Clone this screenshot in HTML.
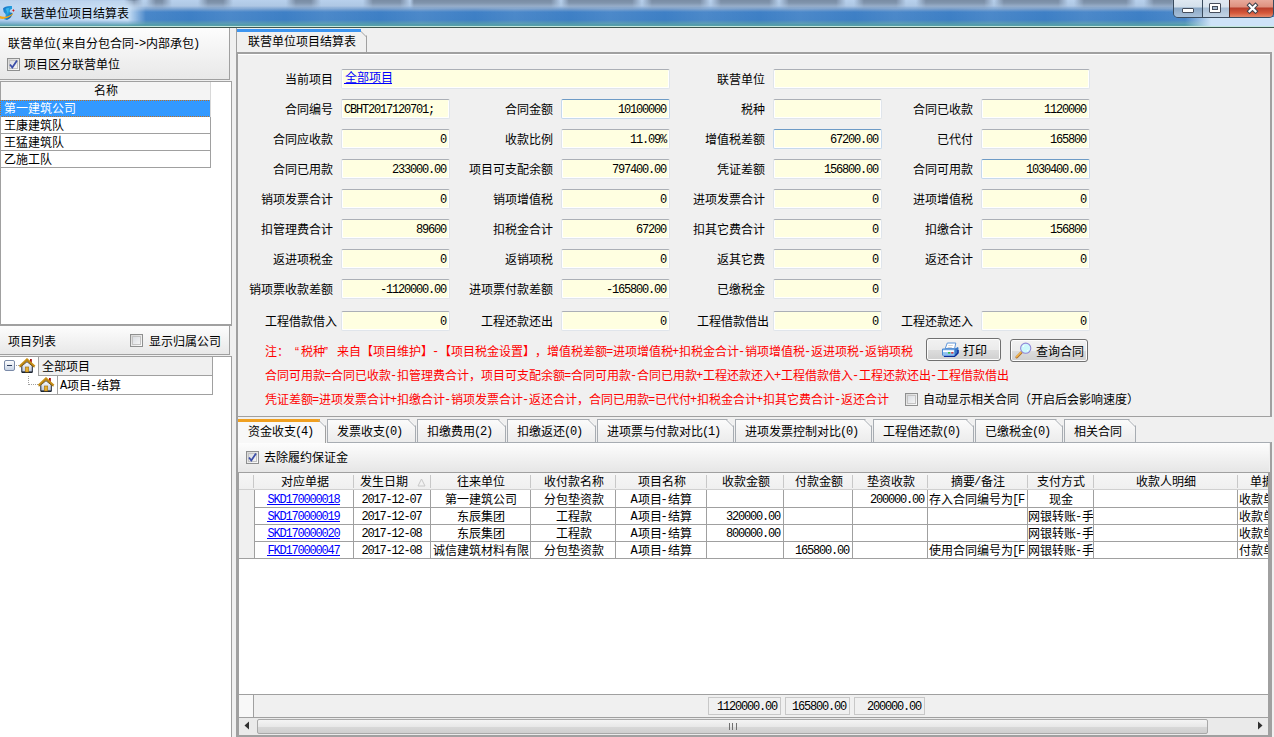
<!DOCTYPE html><html lang="zh-CN"><head><meta charset="utf-8"><style>
*{box-sizing:border-box}
html,body{margin:0;padding:0}
body{width:1274px;height:737px;overflow:hidden;position:relative;background:#f0f0f0;font-family:"Liberation Sans",sans-serif;font-size:12px;color:#000;line-height:1}
.a{position:absolute}
w{display:inline-block;width:12px;text-align:center;padding-left:1px;position:relative;top:1px;font-style:normal;font-weight:normal;text-decoration:none}
.nocjk w:not(.q){-webkit-text-fill-color:transparent;background-repeat:no-repeat;background-image:linear-gradient(currentColor,currentColor),linear-gradient(currentColor,currentColor),linear-gradient(currentColor,currentColor),linear-gradient(currentColor,currentColor),linear-gradient(currentColor,currentColor),linear-gradient(currentColor,currentColor),linear-gradient(currentColor,currentColor);background-size:10px 1px,10px 1px,1px 11px,1px 11px,8px 1px,8px 1px,0 0;background-position:1px 0,1px 10px,1px 0,10px 0,2px 4px,2px 7px,0 0}
.nocjk w.b{background-size:1px 11px,3px 1px,6px 1px,6px 1px,1px 10px,1px 10px,4px 1px;background-position:2px 0,0 3px,5px 1px,5px 10px,5px 1px,10px 1px,6px 5px}
.nocjk w.c{background-size:10px 1px,10px 1px,10px 1px,1px 11px,1px 5px,1px 5px,0 0;background-position:1px 1px,1px 5px,1px 10px,6px 0,2px 5px,10px 5px,0 0}
.nocjk w.p{background-image:linear-gradient(currentColor,currentColor);background-size:2px 2px;background-position:2px 9px}
h{font-family:"Liberation Mono",monospace;font-size:12px;letter-spacing:-1.2px;font-weight:normal}
.t{position:absolute;white-space:nowrap;line-height:12px;height:12px}
.n{font-family:"Liberation Mono",monospace;font-size:12px;letter-spacing:-1.2px}
.inp{position:absolute;height:20px;background:#ffffe1;border:1px solid #e0e5eb;border-top-color:#abafb6;border-radius:2px;box-shadow:inset 1px 0 #fff,inset -1px -1px #fff}
.inp .v{position:absolute;right:3px;top:3px;white-space:nowrap;line-height:12px}
.lb{position:absolute;white-space:nowrap;line-height:12px;text-align:right}
.cb{position:absolute;width:13px;height:13px;border:1px solid #8e8f8f;background:linear-gradient(135deg,#d6d6d6,#fdfdfd)}
.cb i{position:absolute;left:1px;top:1px;width:9px;height:9px;border:1px solid #c4c4c4;background:linear-gradient(135deg,#dadde2,#f4f4f4)}
.foc{border-color:#c6d9ec!important;border-top-color:#6e9bc6!important}
.grad{background:linear-gradient(#fdfdfd,#e8e8e8)}
.tab{position:absolute;top:419px;height:24px;border:1px solid #a7acb2;border-bottom:none;background:linear-gradient(#fbfbfb,#ebebeb);clip-path:polygon(0 0,calc(100% - 7px) 0,100% 7px,100% 100%,0 100%)}
.tabc{position:absolute;top:419px;width:8px;height:8px}
.hd{position:absolute;top:473px;height:17px;background:#f4f4f4}
.gl{position:absolute;background:#a0a0a0}
a.lk{color:#0000ff;text-decoration:underline}
.red{color:#ff0000}
</style></head><body>
<div class="a" style="left:0;top:0;width:1274px;height:28px;background:linear-gradient(#b8d0ec 0px,#aec7e4 6px,#7aa2d0 9px,#3f80c6 12px,#3d7fc4 20px,#4a8db8 22px,#58a3a8 26px,#c4e8de 26px,#c4e8de 27px,#3d5650 27px,#3d5650 28px)"></div>
<div class="a" style="left:0;top:0;width:1274px;height:11px;background:linear-gradient(90deg,rgba(120,138,160,0) 124px, rgba(105,122,145,0.8) 134px, rgba(105,122,145,0.8) 133px, rgba(120,138,160,0) 143px,rgba(120,138,160,0) 146px, rgba(105,122,145,0.8) 156px, rgba(105,122,145,0.8) 162px, rgba(120,138,160,0) 172px,rgba(120,138,160,0) 198px, rgba(105,122,145,0.8) 208px, rgba(105,122,145,0.8) 223px, rgba(120,138,160,0) 233px,rgba(120,138,160,0) 286px, rgba(105,122,145,0.8) 296px, rgba(105,122,145,0.8) 311px, rgba(120,138,160,0) 321px,rgba(120,138,160,0) 363px, rgba(105,122,145,0.8) 373px, rgba(105,122,145,0.8) 400px, rgba(120,138,160,0) 410px,rgba(120,138,160,0) 404px, rgba(105,122,145,0.8) 414px, rgba(105,122,145,0.8) 551px, rgba(120,138,160,0) 561px,rgba(120,138,160,0) 559px, rgba(105,122,145,0.8) 569px, rgba(105,122,145,0.8) 632px, rgba(120,138,160,0) 642px,rgba(120,138,160,0) 642px, rgba(105,122,145,0.8) 652px, rgba(105,122,145,0.8) 700px, rgba(120,138,160,0) 710px,rgba(120,138,160,0) 711px, rgba(105,122,145,0.8) 721px, rgba(105,122,145,0.8) 769px, rgba(120,138,160,0) 779px,rgba(120,138,160,0) 779px, rgba(105,122,145,0.8) 789px, rgba(105,122,145,0.8) 836px, rgba(120,138,160,0) 846px,rgba(120,138,160,0) 854px, rgba(105,122,145,0.8) 864px, rgba(105,122,145,0.8) 896px, rgba(120,138,160,0) 906px,rgba(120,138,160,0) 916px, rgba(105,122,145,0.8) 926px, rgba(105,122,145,0.8) 984px, rgba(120,138,160,0) 994px,rgba(120,138,160,0) 994px, rgba(105,122,145,0.8) 1004px, rgba(105,122,145,0.8) 1058px, rgba(120,138,160,0) 1068px,rgba(120,138,160,0) 1074px, rgba(105,122,145,0.8) 1084px, rgba(105,122,145,0.8) 1126px, rgba(120,138,160,0) 1136px,rgba(120,138,160,0) 1144px, rgba(105,122,145,0.8) 1154px, rgba(105,122,145,0.8) 1171px, rgba(120,138,160,0) 1181px);-webkit-mask-image:linear-gradient(#000 0px,rgba(0,0,0,0.85) 3px,rgba(0,0,0,0.3) 7px,rgba(0,0,0,0) 11px);mask-image:linear-gradient(#000 0px,rgba(0,0,0,0.85) 3px,rgba(0,0,0,0.3) 7px,rgba(0,0,0,0) 11px)"></div>
<div class="a" style="left:0;top:8px;width:1274px;height:16px;background:repeating-linear-gradient(90deg,rgba(255,255,255,0) 0px,rgba(255,255,255,0.07) 40px,rgba(255,255,255,0) 95px)"></div>
<div class="a" style="left:1185px;top:17px;width:89px;height:9px;background:linear-gradient(90deg,rgba(206,227,248,0) 0,rgba(206,227,248,1) 26px)"></div>
<div class="a" style="left:0;top:1px;width:150px;height:25px;background:linear-gradient(90deg,rgba(200,222,246,0.85) 0,rgba(208,228,248,0.95) 128px,rgba(205,225,245,0) 146px);-webkit-mask-image:linear-gradient(rgba(0,0,0,0.3) 0,#000 7px,#000 19px,rgba(0,0,0,0) 25px);mask-image:linear-gradient(rgba(0,0,0,0.3) 0,#000 7px,#000 19px,rgba(0,0,0,0) 25px)"></div>
<svg class="a" style="left:0;top:0" width="20" height="26" viewBox="0 0 20 26">
<defs><linearGradient id="ig" x1="0" y1="0" x2="1" y2="1"><stop offset="0" stop-color="#1468c0"/><stop offset="0.5" stop-color="#22a0e0"/><stop offset="1" stop-color="#063a88"/></linearGradient></defs>
<path d="M3 8.5 Q5 5.5 12 6 L12 8.8 Q9.5 9.5 9.6 11.5 Q10 12.5 12.5 13 Q12 18 7 20 L3.5 19 Q6.5 16.5 5.5 14 Q3 12 3 8.5 Z" fill="url(#ig)"/>
<path d="M5.5 9 Q7 7.5 9 8 L8 14 Q7 11 5.5 9 Z" fill="#3ec0f0" opacity="0.8"/>
<path d="M0 16 Q6 18.5 13 13.2 L12.6 14.8 Q6 20 0 18.6 Z" fill="#f4a818"/>
<path d="M13.4 9 L14 10 L15 10.4 L14 10.8 L13.4 12 L12.8 10.8 L11.8 10.4 L12.8 10 Z" fill="#d01818"/>
</svg>
<div class="t" style="left:20px;top:7px"><w class="c">联</w><w class="b">营</w><w>单</w><w>位</w><w>项</w><w class="c">目</w><w class="b">结</w><w class="b">算</w><w>表</w></div>
<div class="a" style="left:1173px;top:-3px;width:101px;height:21px;border:1px solid #3a4b5e;border-top:none;border-radius:0 0 5px 5px;overflow:hidden">
 <div class="a" style="left:0;top:0;width:28px;height:20px;background:linear-gradient(#e4ecf5,#d3dfeb 50%,#8aa7c6 55%,#a9c0d8)"></div>
 <div class="a" style="left:28px;top:0;width:1px;height:20px;background:#3a4b5e"></div>
 <div class="a" style="left:29px;top:0;width:26px;height:20px;background:linear-gradient(#e4ecf5,#d8e3ee 50%,#a9bfd6 55%,#c3d4e6)"></div>
 <div class="a" style="left:55px;top:0;width:1px;height:20px;background:#5a2a20"></div>
 <div class="a" style="left:56px;top:0;width:45px;height:20px;background:linear-gradient(#ecb4a8,#de907e 50%,#b83e2c 55%,#d6583a 80%,#e48a6c)"></div>
</div>
<div class="a" style="left:1182px;top:8px;width:12px;height:5px;background:#fff;border:1px solid #454d5c;border-radius:1px"></div>
<div class="a" style="left:1209px;top:3px;width:12px;height:10px;background:#fff;border:1px solid #454d5c;border-radius:1px"></div>
<div class="a" style="left:1212px;top:6px;width:6px;height:4px;background:#a5bad0;border:1px solid #454d5c"></div>
<svg class="a" style="left:1246px;top:2px" width="13" height="12" viewBox="0 0 13 12"><path d="M3.5 3.2 L9.5 9.2 M9.5 3.2 L3.5 9.2" stroke="#40444e" stroke-width="4.2" stroke-linecap="square"/><path d="M3.5 3.2 L9.5 9.2 M9.5 3.2 L3.5 9.2" stroke="#fff" stroke-width="2.2" stroke-linecap="square"/></svg>
<div class="a grad" style="left:0;top:28px;width:230px;height:52px;border-right:1px solid #a0a0a0;border-bottom:1px solid #a0a0a0"></div>
<div class="t" style="left:7px;top:37px"><w class="c">联</w><w class="b">营</w><w>单</w><w>位</w><h>(</h><w>来</w><w>自</w><w class="b">分</w><w class="b">包</w><w class="c">合</w><w>同</w><h>-&gt;</h><w class="b">内</w><w class="b">部</w><w>承</w><w class="b">包</w><h>)</h></div>
<div class="cb" style="left:7px;top:58px"><i></i></div>
<svg class="a" style="left:8px;top:59px" width="11" height="11" viewBox="0 0 11 11"><path d="M2 5.5 L4.3 8.5 L9 1.5" stroke="#3c4ea8" stroke-width="1.8" fill="none"/></svg>
<div class="t" style="left:23px;top:58px"><w>项</w><w class="c">目</w><w>区</w><w class="b">分</w><w class="c">联</w><w class="b">营</w><w>单</w><w>位</w></div>
<div class="a" style="left:0;top:81px;width:232px;height:245px;background:#fff;border:1px solid #a0a0a0;border-bottom:2px solid #a0a0a0"></div>
<div class="a" style="left:1px;top:82px;width:210px;height:18px;background:#f4f4f4"></div>
<div class="t" style="left:93px;top:84px"><w class="b">名</w><w class="b">称</w></div>
<div class="a" style="left:0px;top:100px;width:211px;height:17px;background:#3399ff;border:1px dotted #c07020"></div>
<div class="t" style="left:3px;top:102px;color:#fff"><w class="c">第</w><w>一</w><w class="c">建</w><w>筑</w><w>公</w><w class="b">司</w></div>
<div class="a" style="left:0;top:116px;width:211px;height:18px;border:1px solid #a0a0a0;border-top:none"></div>
<div class="t" style="left:3px;top:119px"><w class="c">王</w><w class="b">康</w><w class="c">建</w><w>筑</w><w class="b">队</w></div>
<div class="a" style="left:0;top:133px;width:211px;height:18px;border:1px solid #a0a0a0;border-top:none"></div>
<div class="t" style="left:3px;top:136px"><w class="c">王</w><w class="b">猛</w><w class="c">建</w><w>筑</w><w class="b">队</w></div>
<div class="a" style="left:0;top:150px;width:211px;height:18px;border:1px solid #a0a0a0;border-top:none"></div>
<div class="t" style="left:3px;top:153px"><w class="c">乙</w><w class="c">施</w><w class="b">工</w><w class="b">队</w></div>
<div class="a" style="left:210px;top:82px;width:1px;height:35px;background:#d8d8d8"></div>
<div class="a grad" style="left:0;top:326px;width:230px;height:29px;border-right:1px solid #a0a0a0;border-bottom:1px solid #a0a0a0"></div>
<div class="t" style="left:7px;top:335px"><w>项</w><w class="c">目</w><w>列</w><w>表</w></div>
<div class="cb" style="left:130px;top:334px"><i></i></div>
<div class="t" style="left:148px;top:335px"><w class="c">显</w><w class="c">示</w><w>归</w><w>属</w><w>公</w><w class="b">司</w></div>
<div class="a" style="left:0;top:356px;width:232px;height:381px;background:#fff;border-top:1px solid #a0a0a0;border-right:1px solid #a0a0a0"></div>
<div class="a" style="left:38px;top:357px;width:175px;height:19px;background:#f0f0f0;border-left:1px solid #a0a0a0;border-right:1px solid #a0a0a0;border-bottom:1px solid #a0a0a0"></div>
<div class="t" style="left:41px;top:360px"><w class="c">全</w><w class="b">部</w><w>项</w><w class="c">目</w></div>
<div class="a" style="left:57px;top:376px;width:156px;height:19px;background:#fff;border-left:1px solid #a0a0a0;border-right:1px solid #a0a0a0;border-bottom:1px solid #a0a0a0"></div>
<div class="a" style="left:0;top:394px;width:58px;height:1px;background:#a0a0a0"></div>
<div class="t" style="left:60px;top:379px"><h>A</h><w>项</w><w class="c">目</w><h>-</h><w class="b">结</w><w class="b">算</w></div>
<div class="a" style="left:4px;top:360px;width:11px;height:11px;border:1px solid #7a8aa8;border-radius:2px;background:linear-gradient(#fefefe,#c8d4e6)"></div>
<div class="a" style="left:7px;top:365px;width:5px;height:1px;background:#2a3a5a"></div>
<div class="a" style="left:16px;top:365px;width:3px;border-top:1px dotted #a0a0a0"></div>
<div class="a" style="left:28px;top:376px;height:9px;border-left:1px dotted #a0a0a0"></div>
<div class="a" style="left:28px;top:384px;width:10px;border-top:1px dotted #a0a0a0"></div>
<svg class="a" style="left:19px;top:358px" width="17" height="16" viewBox="0 0 17 16"><defs><linearGradient id="hb" x1="0" y1="0" x2="0" y2="1"><stop offset="0" stop-color="#ffffff"/><stop offset="1" stop-color="#b8c4dc"/></linearGradient></defs><rect x="11" y="1" width="1.8" height="4.5" fill="#a81010"/><path d="M2.8 8 L8 3.6 L13.3 8 L13.3 14.2 L2.8 14.2 Z" fill="url(#hb)" stroke="#1c2430" stroke-width="1"/><path d="M2.8 14.3 L13.3 14.3" stroke="#1c2430" stroke-width="1.4"/><rect x="6.3" y="9" width="3.4" height="5" fill="#e8b030" stroke="#a07010" stroke-width="0.6"/><path d="M0.6 8.6 L8 1.6 L15.6 8.6" stroke="#c89018" stroke-width="2.4" fill="none" stroke-linejoin="miter"/><path d="M0.6 9.4 L8 2.6 L15.6 9.4" stroke="#7a5008" stroke-width="0.6" fill="none" opacity="0.7"/></svg>
<svg class="a" style="left:38px;top:377px" width="17" height="16" viewBox="0 0 17 16"><defs><linearGradient id="hb2" x1="0" y1="0" x2="0" y2="1"><stop offset="0" stop-color="#ffffff"/><stop offset="1" stop-color="#b8c4dc"/></linearGradient></defs><rect x="11" y="1" width="1.8" height="4.5" fill="#a81010"/><path d="M2.8 8 L8 3.6 L13.3 8 L13.3 14.2 L2.8 14.2 Z" fill="url(#hb2)" stroke="#1c2430" stroke-width="1"/><path d="M2.8 14.3 L13.3 14.3" stroke="#1c2430" stroke-width="1.4"/><rect x="6.3" y="9" width="3.4" height="5" fill="#e8b030" stroke="#a07010" stroke-width="0.6"/><path d="M0.6 8.6 L8 1.6 L15.6 8.6" stroke="#c89018" stroke-width="2.4" fill="none" stroke-linejoin="miter"/><path d="M0.6 9.4 L8 2.6 L15.6 9.4" stroke="#7a5008" stroke-width="0.6" fill="none" opacity="0.7"/></svg>
<div class="a" style="left:236px;top:28px;width:1px;height:709px;background:#a0a0a0"></div>
<div class="a" style="left:237px;top:29px;width:130px;height:24px;background:#f0f0f0;border-right:1px solid #a0a0a0;clip-path:polygon(0 0,calc(100% - 7px) 0,100% 7px,100% 100%,0 100%)"></div>
<svg class="a" style="left:359px;top:29px" width="8" height="8"><path d="M0 0.5 L7.5 8" stroke="#a0a0a0" stroke-width="1"/></svg>
<div class="a" style="left:237px;top:29px;width:124px;height:3px;background:#3d95f0"></div>
<div class="t" style="left:247px;top:35px"><w class="c">联</w><w class="b">营</w><w>单</w><w>位</w><w>项</w><w class="c">目</w><w class="b">结</w><w class="b">算</w><w>表</w></div>
<div class="a" style="left:237px;top:52px;width:1035px;height:365px;border:1px solid #a0a0a0;border-right:2px solid #a0a0a0;border-top:2px solid #a0a0a0"></div>
<div class="a" style="left:238px;top:54px;width:1032px;height:1px;background:#fff"></div>
<div class="lb" style="right:942px;top:73px"><w class="b">当</w><w>前</w><w>项</w><w class="c">目</w></div>
<div class="inp" style="left:341px;top:69px;width:329px"><div class="t" style="left:2px;top:1px;height:13px"><span style="color:#0000ff;border-bottom:1px solid #0000ff;display:inline-block;line-height:12px;height:13px"><w class="c">全</w><w class="b">部</w><w>项</w><w class="c">目</w></span></div></div>
<div class="lb" style="right:510px;top:73px"><w class="c">联</w><w class="b">营</w><w>单</w><w>位</w></div>
<div class="inp" style="left:773px;top:69px;width:317px"></div>
<div class="lb" style="right:942px;top:103px"><w class="c">合</w><w>同</w><w class="c">编</w><w>号</w></div>
<div class="inp" style="left:341px;top:99px;width:109px"><div class="t n" style="left:2px;top:4px"><h>CBHT2017120701;</h></div></div>
<div class="lb" style="right:722px;top:103px"><w class="c">合</w><w>同</w><w>金</w><w>额</w></div>
<div class="inp foc" style="left:561px;top:99px;width:109px"><div class="v n" style="top:4px"><h>10100000</h></div></div>
<div class="lb" style="right:510px;top:103px"><w class="b">税</w><w class="c">种</w></div>
<div class="inp" style="left:773px;top:99px;width:109px"><div class="v n" style="top:4px"></div></div>
<div class="lb" style="right:302px;top:103px"><w class="c">合</w><w>同</w><w class="c">已</w><w class="c">收</w><w class="b">款</w></div>
<div class="inp" style="left:981px;top:99px;width:109px"><div class="v n" style="top:4px"><h>1120000</h></div></div>
<div class="lb" style="right:942px;top:133px"><w class="c">合</w><w>同</w><w class="c">应</w><w class="c">收</w><w class="b">款</w></div>
<div class="inp" style="left:341px;top:129px;width:109px"><div class="v n" style="top:4px"><h>0</h></div></div>
<div class="lb" style="right:722px;top:133px"><w class="c">收</w><w class="b">款</w><w class="b">比</w><w class="c">例</w></div>
<div class="inp" style="left:561px;top:129px;width:109px"><div class="v n" style="top:4px"><h>11.09%</h></div></div>
<div class="lb" style="right:510px;top:133px"><w>增</w><w class="c">值</w><w class="b">税</w><w class="b">差</w><w>额</w></div>
<div class="inp foc" style="left:773px;top:129px;width:109px"><div class="v n" style="top:4px"><h>67200.00</h></div></div>
<div class="lb" style="right:302px;top:133px"><w class="c">已</w><w class="c">代</w><w>付</w></div>
<div class="inp" style="left:981px;top:129px;width:109px"><div class="v n" style="top:4px"><h>165800</h></div></div>
<div class="lb" style="right:942px;top:163px"><w class="c">合</w><w>同</w><w class="c">已</w><w class="b">用</w><w class="b">款</w></div>
<div class="inp" style="left:341px;top:159px;width:109px"><div class="v n" style="top:4px"><h>233000.00</h></div></div>
<div class="lb" style="right:722px;top:163px"><w>项</w><w class="c">目</w><w class="b">可</w><w class="b">支</w><w>配</w><w>余</w><w>额</w></div>
<div class="inp" style="left:561px;top:159px;width:109px"><div class="v n" style="top:4px"><h>797400.00</h></div></div>
<div class="lb" style="right:510px;top:163px"><w>凭</w><w class="c">证</w><w class="b">差</w><w>额</w></div>
<div class="inp" style="left:773px;top:159px;width:109px"><div class="v n" style="top:4px"><h>156800.00</h></div></div>
<div class="lb" style="right:302px;top:163px"><w class="c">合</w><w>同</w><w class="b">可</w><w class="b">用</w><w class="b">款</w></div>
<div class="inp foc" style="left:981px;top:159px;width:109px"><div class="v n" style="top:4px"><h>1030400.00</h></div></div>
<div class="lb" style="right:942px;top:193px"><w class="c">销</w><w>项</w><w class="b">发</w><w>票</w><w class="c">合</w><w>计</w></div>
<div class="inp" style="left:341px;top:189px;width:109px"><div class="v n" style="top:4px"><h>0</h></div></div>
<div class="lb" style="right:722px;top:193px"><w class="c">销</w><w>项</w><w>增</w><w class="c">值</w><w class="b">税</w></div>
<div class="inp" style="left:561px;top:189px;width:109px"><div class="v n" style="top:4px"><h>0</h></div></div>
<div class="lb" style="right:510px;top:193px"><w class="c">进</w><w>项</w><w class="b">发</w><w>票</w><w class="c">合</w><w>计</w></div>
<div class="inp" style="left:773px;top:189px;width:109px"><div class="v n" style="top:4px"><h>0</h></div></div>
<div class="lb" style="right:302px;top:193px"><w class="c">进</w><w>项</w><w>增</w><w class="c">值</w><w class="b">税</w></div>
<div class="inp" style="left:981px;top:189px;width:109px"><div class="v n" style="top:4px"><h>0</h></div></div>
<div class="lb" style="right:942px;top:223px"><w class="c">扣</w><w class="c">管</w><w class="c">理</w><w>费</w><w class="c">合</w><w>计</w></div>
<div class="inp" style="left:341px;top:219px;width:109px"><div class="v n" style="top:4px"><h>89600</h></div></div>
<div class="lb" style="right:722px;top:223px"><w class="c">扣</w><w class="b">税</w><w>金</w><w class="c">合</w><w>计</w></div>
<div class="inp" style="left:561px;top:219px;width:109px"><div class="v n" style="top:4px"><h>67200</h></div></div>
<div class="lb" style="right:510px;top:223px"><w class="c">扣</w><w class="b">其</w><w>它</w><w>费</w><w class="c">合</w><w>计</w></div>
<div class="inp" style="left:773px;top:219px;width:109px"><div class="v n" style="top:4px"><h>0</h></div></div>
<div class="lb" style="right:302px;top:223px"><w class="c">扣</w><w class="c">缴</w><w class="c">合</w><w>计</w></div>
<div class="inp" style="left:981px;top:219px;width:109px"><div class="v n" style="top:4px"><h>156800</h></div></div>
<div class="lb" style="right:942px;top:253px"><w class="b">返</w><w class="c">进</w><w>项</w><w class="b">税</w><w>金</w></div>
<div class="inp" style="left:341px;top:249px;width:109px"><div class="v n" style="top:4px"><h>0</h></div></div>
<div class="lb" style="right:722px;top:253px"><w class="b">返</w><w class="c">销</w><w>项</w><w class="b">税</w></div>
<div class="inp" style="left:561px;top:249px;width:109px"><div class="v n" style="top:4px"><h>0</h></div></div>
<div class="lb" style="right:510px;top:253px"><w class="b">返</w><w class="b">其</w><w>它</w><w>费</w></div>
<div class="inp" style="left:773px;top:249px;width:109px"><div class="v n" style="top:4px"><h>0</h></div></div>
<div class="lb" style="right:302px;top:253px"><w class="b">返</w><w class="c">还</w><w class="c">合</w><w>计</w></div>
<div class="inp" style="left:981px;top:249px;width:109px"><div class="v n" style="top:4px"><h>0</h></div></div>
<div class="lb" style="right:942px;top:283px"><w class="c">销</w><w>项</w><w>票</w><w class="c">收</w><w class="b">款</w><w class="b">差</w><w>额</w></div>
<div class="inp" style="left:341px;top:279px;width:109px"><div class="v n" style="top:4px"><h>-1120000.00</h></div></div>
<div class="lb" style="right:722px;top:283px"><w class="c">进</w><w>项</w><w>票</w><w>付</w><w class="b">款</w><w class="b">差</w><w>额</w></div>
<div class="inp" style="left:561px;top:279px;width:109px"><div class="v n" style="top:4px"><h>-165800.00</h></div></div>
<div class="lb" style="right:510px;top:283px"><w class="c">已</w><w class="c">缴</w><w class="b">税</w><w>金</w></div>
<div class="inp" style="left:773px;top:279px;width:109px"><div class="v n" style="top:4px"><h>0</h></div></div>
<div class="lb" style="right:938px;top:315px"><w class="b">工</w><w class="b">程</w><w>借</w><w class="b">款</w><w>借</w><w class="c">入</w></div>
<div class="inp" style="left:341px;top:311px;width:109px"><div class="v n" style="top:4px"><h>0</h></div></div>
<div class="lb" style="right:722px;top:315px"><w class="b">工</w><w class="b">程</w><w class="c">还</w><w class="b">款</w><w class="c">还</w><w class="b">出</w></div>
<div class="inp" style="left:561px;top:311px;width:109px"><div class="v n" style="top:4px"><h>0</h></div></div>
<div class="lb" style="right:506px;top:315px"><w class="b">工</w><w class="b">程</w><w>借</w><w class="b">款</w><w>借</w><w class="b">出</w></div>
<div class="inp" style="left:773px;top:311px;width:109px"><div class="v n" style="top:4px"><h>0</h></div></div>
<div class="lb" style="right:302px;top:315px"><w class="b">工</w><w class="b">程</w><w class="c">还</w><w class="b">款</w><w class="c">还</w><w class="c">入</w></div>
<div class="inp" style="left:981px;top:311px;width:109px"><div class="v n" style="top:4px"><h>0</h></div></div>
<div class="t red" style="left:264px;top:345px"><w class="b">注</w><w class="p">：</w><w class="q" style="text-align:right;padding:0 1px 0 0">“</w><w class="b">税</w><w class="c">种</w><w class="q" style="text-align:left;padding:0">”</w><w>来</w><w>自</w><w class="p">【</w><w>项</w><w class="c">目</w><w class="b">维</w><w class="b">护</w><w class="p">】</w><h>-</h><w class="p">【</w><w>项</w><w class="c">目</w><w class="b">税</w><w>金</w><w class="c">设</w><w>置</w><w class="p">】</w><w class="p">，</w><w>增</w><w class="c">值</w><w class="b">税</w><w class="b">差</w><w>额</w><h>=</h><w class="c">进</w><w>项</w><w>增</w><w class="c">值</w><w class="b">税</w><h>+</h><w class="c">扣</w><w class="b">税</w><w>金</w><w class="c">合</w><w>计</w><h>-</h><w class="c">销</w><w>项</w><w>增</w><w class="c">值</w><w class="b">税</w><h>-</h><w class="b">返</w><w class="c">进</w><w>项</w><w class="b">税</w><h>-</h><w class="b">返</w><w class="c">销</w><w>项</w><w class="b">税</w></div>
<div class="t red" style="left:264px;top:369px"><w class="c">合</w><w>同</w><w class="b">可</w><w class="b">用</w><w class="b">款</w><h>=</h><w class="c">合</w><w>同</w><w class="c">已</w><w class="c">收</w><w class="b">款</w><h>-</h><w class="c">扣</w><w class="c">管</w><w class="c">理</w><w>费</w><w class="c">合</w><w>计</w><w class="p">，</w><w>项</w><w class="c">目</w><w class="b">可</w><w class="b">支</w><w>配</w><w>余</w><w>额</w><h>=</h><w class="c">合</w><w>同</w><w class="b">可</w><w class="b">用</w><w class="b">款</w><h>-</h><w class="c">合</w><w>同</w><w class="c">已</w><w class="b">用</w><w class="b">款</w><h>+</h><w class="b">工</w><w class="b">程</w><w class="c">还</w><w class="b">款</w><w class="c">还</w><w class="c">入</w><h>+</h><w class="b">工</w><w class="b">程</w><w>借</w><w class="b">款</w><w>借</w><w class="c">入</w><h>-</h><w class="b">工</w><w class="b">程</w><w class="c">还</w><w class="b">款</w><w class="c">还</w><w class="b">出</w><h>-</h><w class="b">工</w><w class="b">程</w><w>借</w><w class="b">款</w><w>借</w><w class="b">出</w></div>
<div class="t red" style="left:264px;top:393px"><w>凭</w><w class="c">证</w><w class="b">差</w><w>额</w><h>=</h><w class="c">进</w><w>项</w><w class="b">发</w><w>票</w><w class="c">合</w><w>计</w><h>+</h><w class="c">扣</w><w class="c">缴</w><w class="c">合</w><w>计</w><h>-</h><w class="c">销</w><w>项</w><w class="b">发</w><w>票</w><w class="c">合</w><w>计</w><h>-</h><w class="b">返</w><w class="c">还</w><w class="c">合</w><w>计</w><w class="p">，</w><w class="c">合</w><w>同</w><w class="c">已</w><w class="b">用</w><w class="b">款</w><h>=</h><w class="c">已</w><w class="c">代</w><w>付</w><h>+</h><w class="c">扣</w><w class="b">税</w><w>金</w><w class="c">合</w><w>计</w><h>+</h><w class="c">扣</w><w class="b">其</w><w>它</w><w>费</w><w class="c">合</w><w>计</w><h>-</h><w class="b">返</w><w class="c">还</w><w class="c">合</w><w>计</w></div>
<div class="cb" style="left:905px;top:393px"><i></i></div>
<div class="t" style="left:922px;top:393px"><w>自</w><w class="b">动</w><w class="c">显</w><w class="c">示</w><w>相</w><w class="b">关</w><w class="c">合</w><w>同</w><w class="p">（</w><w class="c">开</w><w class="c">启</w><w class="c">后</w><w>会</w><w class="b">影</w><w class="b">响</w><w class="b">速</w><w class="c">度</w><w class="p">）</w></div>
<div class="a" style="left:926px;top:338px;width:75px;height:23px;border:1px solid #707070;border-radius:3px;background:linear-gradient(#f2f2f2 0%,#ebebeb 50%,#dddddd 51%,#cfcfcf 100%);box-shadow:inset 0 0 0 1px #fcfcfc"></div>
<div class="a" style="left:1010px;top:339px;width:78px;height:23px;border:1px solid #707070;border-radius:3px;background:linear-gradient(#f2f2f2 0%,#ebebeb 50%,#dddddd 51%,#cfcfcf 100%);box-shadow:inset 0 0 0 1px #fcfcfc"></div>
<svg class="a" style="left:938px;top:338px" width="24" height="24" viewBox="0 0 24 24">
<path d="M9.3 5 L17.8 5 L16.6 10.6 L7.2 10.6 Z" fill="#fff" stroke="#5c94d8" stroke-width="1"/>
<path d="M10.3 7.5 L14.8 7.5 M9.6 9.5 L13.8 9.5" stroke="#c8c8c8" stroke-width="0.8"/>
<path d="M4.5 11 L17 11 L20 9.5 L20 15 L17 18.5 L6 18.5 L4.5 17 Z" fill="#8ec0f0" stroke="#4a86d0" stroke-width="1"/>
<path d="M16.5 11 L20 9.5 L20 15 L16.5 18.5 Z" fill="#3a78c8"/>
<path d="M17 18 L20 15 L20 12" stroke="#0a2c98" stroke-width="1.4" fill="none"/>
<rect x="5" y="12.3" width="11" height="1.8" fill="#fff"/>
<rect x="10" y="14.2" width="2.2" height="1.3" fill="#20c020"/><rect x="13.2" y="14.2" width="2.2" height="1.3" fill="#e02020"/>
<path d="M6 18.4 L17 18.4" stroke="#0a2c98" stroke-width="1.2"/>
</svg>
<div class="t" style="left:962px;top:344px"><w class="b">打</w><w>印</w></div>
<svg class="a" style="left:1012px;top:338px" width="24" height="24" viewBox="0 0 24 24">
<path d="M4.8 19.2 L9.2 14.6" stroke="#b07030" stroke-width="2.6" stroke-linecap="round"/>
<path d="M4.6 18.8 L9 14.2" stroke="#f4b848" stroke-width="1.4" stroke-linecap="round"/>
<circle cx="13.7" cy="10.2" r="5.1" fill="#ccf8fc" stroke="#9088d8" stroke-width="1.1"/>
<path d="M10.5 9 Q11 7.2 12.6 6.8 L11.5 9 Z" fill="#fff"/><path d="M14.5 12.8 Q16 12.5 16.6 11 L16 13.4 Z" fill="#fff"/>
</svg>
<div class="t" style="left:1035px;top:345px"><w class="c">查</w><w class="c">询</w><w class="c">合</w><w>同</w></div>
<div class="a" style="left:237px;top:442px;width:1035px;height:295px;border-left:1px solid #a0a0a0;border-right:2px solid #a0a0a0"></div>
<div class="tab" style="left:238px;width:88px;background:#f8f8f8;border-color:#a0a0a0;border-left:none"></div>
<div class="a" style="left:238px;top:419px;width:82px;height:3px;background:#f0a020"></div>
<svg class="a" style="left:318px;top:419px" width="8" height="8"><path d="M0 0.5 L7.5 8" stroke="#a7acb2" stroke-width="1"/></svg>
<div class="t" style="left:247px;top:425px"><w class="c">资</w><w>金</w><w class="c">收</w><w class="b">支</w><h>(4)</h></div>
<div class="tab" style="left:327px;width:89px"></div>
<svg class="a" style="left:408px;top:419px" width="8" height="8"><path d="M0 0.5 L7.5 8" stroke="#a7acb2" stroke-width="1"/></svg>
<div class="t" style="left:336px;top:425px"><w class="b">发</w><w>票</w><w class="c">收</w><w class="b">支</w><h>(0)</h></div>
<div class="tab" style="left:417px;width:89px"></div>
<svg class="a" style="left:498px;top:419px" width="8" height="8"><path d="M0 0.5 L7.5 8" stroke="#a7acb2" stroke-width="1"/></svg>
<div class="t" style="left:426px;top:425px"><w class="c">扣</w><w class="c">缴</w><w>费</w><w class="b">用</w><h>(2)</h></div>
<div class="tab" style="left:507px;width:89px"></div>
<svg class="a" style="left:588px;top:419px" width="8" height="8"><path d="M0 0.5 L7.5 8" stroke="#a7acb2" stroke-width="1"/></svg>
<div class="t" style="left:516px;top:425px"><w class="c">扣</w><w class="c">缴</w><w class="b">返</w><w class="c">还</w><h>(0)</h></div>
<div class="tab" style="left:597px;width:137px"></div>
<svg class="a" style="left:726px;top:419px" width="8" height="8"><path d="M0 0.5 L7.5 8" stroke="#a7acb2" stroke-width="1"/></svg>
<div class="t" style="left:606px;top:425px"><w class="c">进</w><w>项</w><w>票</w><w class="c">与</w><w>付</w><w class="b">款</w><w class="b">对</w><w class="b">比</w><h>(1)</h></div>
<div class="tab" style="left:735px;width:137px"></div>
<svg class="a" style="left:864px;top:419px" width="8" height="8"><path d="M0 0.5 L7.5 8" stroke="#a7acb2" stroke-width="1"/></svg>
<div class="t" style="left:744px;top:425px"><w class="c">进</w><w>项</w><w class="b">发</w><w>票</w><w class="c">控</w><w class="b">制</w><w class="b">对</w><w class="b">比</w><h>(0)</h></div>
<div class="tab" style="left:873px;width:101px"></div>
<svg class="a" style="left:966px;top:419px" width="8" height="8"><path d="M0 0.5 L7.5 8" stroke="#a7acb2" stroke-width="1"/></svg>
<div class="t" style="left:882px;top:425px"><w class="b">工</w><w class="b">程</w><w>借</w><w class="c">还</w><w class="b">款</w><h>(0)</h></div>
<div class="tab" style="left:975px;width:88px"></div>
<svg class="a" style="left:1055px;top:419px" width="8" height="8"><path d="M0 0.5 L7.5 8" stroke="#a7acb2" stroke-width="1"/></svg>
<div class="t" style="left:984px;top:425px"><w class="c">已</w><w class="c">缴</w><w class="b">税</w><w>金</w><h>(0)</h></div>
<div class="tab" style="left:1064px;width:72px"></div>
<svg class="a" style="left:1128px;top:419px" width="8" height="8"><path d="M0 0.5 L7.5 8" stroke="#a7acb2" stroke-width="1"/></svg>
<div class="t" style="left:1073px;top:425px"><w>相</w><w class="b">关</w><w class="c">合</w><w>同</w></div>
<div class="a" style="left:327px;top:442px;width:944px;height:1px;background:#a7acb2"></div>
<div class="a grad" style="left:238px;top:443px;width:1031px;height:29px;background:linear-gradient(#fdfdfd,#e6e6e6)"></div>
<div class="cb" style="left:246px;top:451px"><i></i></div>
<svg class="a" style="left:247px;top:452px" width="11" height="11" viewBox="0 0 11 11"><path d="M2 5.5 L4.3 8.5 L9 1.5" stroke="#3c4ea8" stroke-width="1.8" fill="none"/></svg>
<div class="t" style="left:263px;top:451px"><w>去</w><w class="b">除</w><w class="b">履</w><w class="b">约</w><w>保</w><w class="c">证</w><w>金</w></div>
<div class="a" style="left:237px;top:416px;width:1px;height:27px;background:#a0a0a0"></div>
<div class="a" style="left:237px;top:472px;width:1033px;height:265px;background:#fff;border-top:1px solid #a0a0a0"></div>
<div class="a" style="left:237px;top:472px;width:2px;height:265px;background:#a0a0a0"></div>
<div class="a" style="left:1268px;top:472px;width:2px;height:265px;background:#a0a0a0"></div>
<div class="a" style="left:239px;top:473px;width:1029px;height:17px;background:linear-gradient(#f6f6f6,#efefef)"></div>
<div class="a" style="left:239px;top:489px;width:1029px;height:1px;background:#d0d0d0"></div>
<div class="a" style="left:253px;top:475px;width:1px;height:13px;background:#c8c8c8"></div>
<div class="a" style="left:353px;top:475px;width:1px;height:13px;background:#c8c8c8"></div>
<div class="t" style="left:254px;width:99px;text-align:center;top:475px"><w class="b">对</w><w class="c">应</w><w>单</w><w class="c">据</w></div>
<div class="a" style="left:430px;top:475px;width:1px;height:13px;background:#c8c8c8"></div>
<div class="t" style="left:359px;top:475px"><w class="b">发</w><w class="b">生</w><w>日</w><w class="c">期</w></div>
<svg class="a" style="left:417px;top:478px" width="9" height="9" viewBox="0 0 9 9"><path d="M1 8 L4.5 1 L8 8 Z" fill="none" stroke="#c8c8c8" stroke-width="1"/></svg>
<div class="a" style="left:530px;top:475px;width:1px;height:13px;background:#c8c8c8"></div>
<div class="t" style="left:430px;width:100px;text-align:center;top:475px"><w class="b">往</w><w>来</w><w>单</w><w>位</w></div>
<div class="a" style="left:615px;top:475px;width:1px;height:13px;background:#c8c8c8"></div>
<div class="t" style="left:530px;width:85px;text-align:center;top:475px"><w class="c">收</w><w>付</w><w class="b">款</w><w class="b">名</w><w class="b">称</w></div>
<div class="a" style="left:706px;top:475px;width:1px;height:13px;background:#c8c8c8"></div>
<div class="t" style="left:615px;width:91px;text-align:center;top:475px"><w>项</w><w class="c">目</w><w class="b">名</w><w class="b">称</w></div>
<div class="a" style="left:783px;top:475px;width:1px;height:13px;background:#c8c8c8"></div>
<div class="t" style="left:706px;width:77px;text-align:center;top:475px"><w class="c">收</w><w class="b">款</w><w>金</w><w>额</w></div>
<div class="a" style="left:852px;top:475px;width:1px;height:13px;background:#c8c8c8"></div>
<div class="t" style="left:783px;width:69px;text-align:center;top:475px"><w>付</w><w class="b">款</w><w>金</w><w>额</w></div>
<div class="a" style="left:927px;top:475px;width:1px;height:13px;background:#c8c8c8"></div>
<div class="t" style="left:852px;width:75px;text-align:center;top:475px"><w>垫</w><w class="c">资</w><w class="c">收</w><w class="b">款</w></div>
<div class="a" style="left:1027px;top:475px;width:1px;height:13px;background:#c8c8c8"></div>
<div class="t" style="left:927px;width:100px;text-align:center;top:475px"><w class="c">摘</w><w class="c">要</w><h>/</h><w>备</w><w class="b">注</w></div>
<div class="a" style="left:1093px;top:475px;width:1px;height:13px;background:#c8c8c8"></div>
<div class="t" style="left:1027px;width:66px;text-align:center;top:475px"><w class="b">支</w><w>付</w><w class="b">方</w><w class="c">式</w></div>
<div class="a" style="left:1237px;top:475px;width:1px;height:13px;background:#c8c8c8"></div>
<div class="t" style="left:1093px;width:144px;text-align:center;top:475px"><w class="c">收</w><w class="b">款</w><w>人</w><w class="c">明</w><w>细</w></div>
<div class="a" style="left:1237px;top:473px;width:31px;height:17px;overflow:hidden"><div class="t" style="left:12px;top:2px"><w>单</w><w class="c">据</w><w class="b">类</w><w class="b">型</w></div></div>
<div class="a" style="left:239px;top:507px;width:1029px;height:1px;background:#a0a0a0"></div>
<div class="a" style="left:239px;top:490px;width:15px;height:17px;background:#f0f0f0"></div>
<div class="a" style="left:254px;top:490px;width:1px;height:18px;background:#a0a0a0"></div>
<div class="t" style="left:254px;width:99px;text-align:center;top:493px"><span style="color:#0000ff;border-bottom:1px solid #0000ff;line-height:12px;height:12px;display:inline-block;vertical-align:top"><h>SKD170000018</h></span></div>
<div class="a" style="left:353px;top:490px;width:1px;height:18px;background:#a0a0a0"></div>
<div class="t" style="left:353px;width:77px;text-align:center;top:493px;overflow:hidden"><h>2017-12-07</h></div>
<div class="a" style="left:430px;top:490px;width:1px;height:18px;background:#a0a0a0"></div>
<div class="t" style="left:430px;width:100px;text-align:center;top:493px;overflow:hidden"><w class="c">第</w><w>一</w><w class="c">建</w><w>筑</w><w>公</w><w class="b">司</w></div>
<div class="a" style="left:530px;top:490px;width:1px;height:18px;background:#a0a0a0"></div>
<div class="t" style="left:530px;width:85px;text-align:center;top:493px;overflow:hidden"><w class="b">分</w><w class="b">包</w><w>垫</w><w class="c">资</w><w class="b">款</w></div>
<div class="a" style="left:615px;top:490px;width:1px;height:18px;background:#a0a0a0"></div>
<div class="t" style="left:615px;width:91px;text-align:center;top:493px;overflow:hidden"><h>A</h><w>项</w><w class="c">目</w><h>-</h><w class="b">结</w><w class="b">算</w></div>
<div class="a" style="left:706px;top:490px;width:1px;height:18px;background:#a0a0a0"></div>
<div class="a" style="left:783px;top:490px;width:1px;height:18px;background:#a0a0a0"></div>
<div class="a" style="left:852px;top:490px;width:1px;height:18px;background:#a0a0a0"></div>
<div class="t" style="left:852px;width:72px;text-align:right;top:493px"><h>200000.00</h></div>
<div class="a" style="left:927px;top:490px;width:1px;height:18px;background:#a0a0a0"></div>
<div class="a" style="left:928px;top:490px;width:99px;height:17px;overflow:hidden"><div class="t" style="left:0;top:3px"><w class="c">存</w><w class="c">入</w><w class="c">合</w><w>同</w><w class="c">编</w><w>号</w><w class="b">为</w><h>[F</h></div></div>
<div class="a" style="left:1027px;top:490px;width:1px;height:18px;background:#a0a0a0"></div>
<div class="t" style="left:1027px;width:66px;text-align:center;top:493px;overflow:hidden"><w>现</w><w>金</w></div>
<div class="a" style="left:1093px;top:490px;width:1px;height:18px;background:#a0a0a0"></div>
<div class="a" style="left:1237px;top:490px;width:1px;height:18px;background:#a0a0a0"></div>
<div class="a" style="left:1238px;top:490px;width:30px;height:17px;overflow:hidden"><div class="t" style="left:0;top:3px"><w class="c">收</w><w class="b">款</w><w>单</w></div></div>
<div class="a" style="left:239px;top:524px;width:1029px;height:1px;background:#a0a0a0"></div>
<div class="a" style="left:239px;top:507px;width:15px;height:17px;background:#f0f0f0"></div>
<div class="a" style="left:254px;top:507px;width:1px;height:18px;background:#a0a0a0"></div>
<div class="t" style="left:254px;width:99px;text-align:center;top:510px"><span style="color:#0000ff;border-bottom:1px solid #0000ff;line-height:12px;height:12px;display:inline-block;vertical-align:top"><h>SKD170000019</h></span></div>
<div class="a" style="left:353px;top:507px;width:1px;height:18px;background:#a0a0a0"></div>
<div class="t" style="left:353px;width:77px;text-align:center;top:510px;overflow:hidden"><h>2017-12-07</h></div>
<div class="a" style="left:430px;top:507px;width:1px;height:18px;background:#a0a0a0"></div>
<div class="t" style="left:430px;width:100px;text-align:center;top:510px;overflow:hidden"><w class="b">东</w><w class="b">辰</w><w>集</w><w>团</w></div>
<div class="a" style="left:530px;top:507px;width:1px;height:18px;background:#a0a0a0"></div>
<div class="t" style="left:530px;width:85px;text-align:center;top:510px;overflow:hidden"><w class="b">工</w><w class="b">程</w><w class="b">款</w></div>
<div class="a" style="left:615px;top:507px;width:1px;height:18px;background:#a0a0a0"></div>
<div class="t" style="left:615px;width:91px;text-align:center;top:510px;overflow:hidden"><h>A</h><w>项</w><w class="c">目</w><h>-</h><w class="b">结</w><w class="b">算</w></div>
<div class="a" style="left:706px;top:507px;width:1px;height:18px;background:#a0a0a0"></div>
<div class="t" style="left:706px;width:74px;text-align:right;top:510px"><h>320000.00</h></div>
<div class="a" style="left:783px;top:507px;width:1px;height:18px;background:#a0a0a0"></div>
<div class="a" style="left:852px;top:507px;width:1px;height:18px;background:#a0a0a0"></div>
<div class="a" style="left:927px;top:507px;width:1px;height:18px;background:#a0a0a0"></div>
<div class="a" style="left:1027px;top:507px;width:1px;height:18px;background:#a0a0a0"></div>
<div class="t" style="left:1027px;width:66px;text-align:center;top:510px;overflow:hidden"><w class="b">网</w><w class="b">银</w><w class="c">转</w><w class="c">账</w><h>-</h><w class="c">手</w></div>
<div class="a" style="left:1093px;top:507px;width:1px;height:18px;background:#a0a0a0"></div>
<div class="a" style="left:1237px;top:507px;width:1px;height:18px;background:#a0a0a0"></div>
<div class="a" style="left:1238px;top:507px;width:30px;height:17px;overflow:hidden"><div class="t" style="left:0;top:3px"><w class="c">收</w><w class="b">款</w><w>单</w></div></div>
<div class="a" style="left:239px;top:541px;width:1029px;height:1px;background:#a0a0a0"></div>
<div class="a" style="left:239px;top:524px;width:15px;height:17px;background:#f0f0f0"></div>
<div class="a" style="left:254px;top:524px;width:1px;height:18px;background:#a0a0a0"></div>
<div class="t" style="left:254px;width:99px;text-align:center;top:527px"><span style="color:#0000ff;border-bottom:1px solid #0000ff;line-height:12px;height:12px;display:inline-block;vertical-align:top"><h>SKD170000020</h></span></div>
<div class="a" style="left:353px;top:524px;width:1px;height:18px;background:#a0a0a0"></div>
<div class="t" style="left:353px;width:77px;text-align:center;top:527px;overflow:hidden"><h>2017-12-08</h></div>
<div class="a" style="left:430px;top:524px;width:1px;height:18px;background:#a0a0a0"></div>
<div class="t" style="left:430px;width:100px;text-align:center;top:527px;overflow:hidden"><w class="b">东</w><w class="b">辰</w><w>集</w><w>团</w></div>
<div class="a" style="left:530px;top:524px;width:1px;height:18px;background:#a0a0a0"></div>
<div class="t" style="left:530px;width:85px;text-align:center;top:527px;overflow:hidden"><w class="b">工</w><w class="b">程</w><w class="b">款</w></div>
<div class="a" style="left:615px;top:524px;width:1px;height:18px;background:#a0a0a0"></div>
<div class="t" style="left:615px;width:91px;text-align:center;top:527px;overflow:hidden"><h>A</h><w>项</w><w class="c">目</w><h>-</h><w class="b">结</w><w class="b">算</w></div>
<div class="a" style="left:706px;top:524px;width:1px;height:18px;background:#a0a0a0"></div>
<div class="t" style="left:706px;width:74px;text-align:right;top:527px"><h>800000.00</h></div>
<div class="a" style="left:783px;top:524px;width:1px;height:18px;background:#a0a0a0"></div>
<div class="a" style="left:852px;top:524px;width:1px;height:18px;background:#a0a0a0"></div>
<div class="a" style="left:927px;top:524px;width:1px;height:18px;background:#a0a0a0"></div>
<div class="a" style="left:1027px;top:524px;width:1px;height:18px;background:#a0a0a0"></div>
<div class="t" style="left:1027px;width:66px;text-align:center;top:527px;overflow:hidden"><w class="b">网</w><w class="b">银</w><w class="c">转</w><w class="c">账</w><h>-</h><w class="c">手</w></div>
<div class="a" style="left:1093px;top:524px;width:1px;height:18px;background:#a0a0a0"></div>
<div class="a" style="left:1237px;top:524px;width:1px;height:18px;background:#a0a0a0"></div>
<div class="a" style="left:1238px;top:524px;width:30px;height:17px;overflow:hidden"><div class="t" style="left:0;top:3px"><w class="c">收</w><w class="b">款</w><w>单</w></div></div>
<div class="a" style="left:239px;top:558px;width:1029px;height:1px;background:#a0a0a0"></div>
<div class="a" style="left:239px;top:541px;width:15px;height:17px;background:#f0f0f0"></div>
<div class="a" style="left:254px;top:541px;width:1px;height:18px;background:#a0a0a0"></div>
<div class="t" style="left:254px;width:99px;text-align:center;top:544px"><span style="color:#0000ff;border-bottom:1px solid #0000ff;line-height:12px;height:12px;display:inline-block;vertical-align:top"><h>FKD170000047</h></span></div>
<div class="a" style="left:353px;top:541px;width:1px;height:18px;background:#a0a0a0"></div>
<div class="t" style="left:353px;width:77px;text-align:center;top:544px;overflow:hidden"><h>2017-12-08</h></div>
<div class="a" style="left:430px;top:541px;width:1px;height:18px;background:#a0a0a0"></div>
<div class="t" style="left:430px;width:100px;text-align:center;top:544px;overflow:hidden"><w>诚</w><w class="b">信</w><w class="c">建</w><w>筑</w><w>材</w><w class="c">料</w><w class="b">有</w><w class="c">限</w></div>
<div class="a" style="left:530px;top:541px;width:1px;height:18px;background:#a0a0a0"></div>
<div class="t" style="left:530px;width:85px;text-align:center;top:544px;overflow:hidden"><w class="b">分</w><w class="b">包</w><w>垫</w><w class="c">资</w><w class="b">款</w></div>
<div class="a" style="left:615px;top:541px;width:1px;height:18px;background:#a0a0a0"></div>
<div class="t" style="left:615px;width:91px;text-align:center;top:544px;overflow:hidden"><h>A</h><w>项</w><w class="c">目</w><h>-</h><w class="b">结</w><w class="b">算</w></div>
<div class="a" style="left:706px;top:541px;width:1px;height:18px;background:#a0a0a0"></div>
<div class="a" style="left:783px;top:541px;width:1px;height:18px;background:#a0a0a0"></div>
<div class="t" style="left:783px;width:66px;text-align:right;top:544px"><h>165800.00</h></div>
<div class="a" style="left:852px;top:541px;width:1px;height:18px;background:#a0a0a0"></div>
<div class="a" style="left:927px;top:541px;width:1px;height:18px;background:#a0a0a0"></div>
<div class="a" style="left:928px;top:541px;width:99px;height:17px;overflow:hidden"><div class="t" style="left:0;top:3px"><w class="c">使</w><w class="b">用</w><w class="c">合</w><w>同</w><w class="c">编</w><w>号</w><w class="b">为</w><h>[F</h></div></div>
<div class="a" style="left:1027px;top:541px;width:1px;height:18px;background:#a0a0a0"></div>
<div class="t" style="left:1027px;width:66px;text-align:center;top:544px;overflow:hidden"><w class="b">网</w><w class="b">银</w><w class="c">转</w><w class="c">账</w><h>-</h><w class="c">手</w></div>
<div class="a" style="left:1093px;top:541px;width:1px;height:18px;background:#a0a0a0"></div>
<div class="a" style="left:1237px;top:541px;width:1px;height:18px;background:#a0a0a0"></div>
<div class="a" style="left:1238px;top:541px;width:30px;height:17px;overflow:hidden"><div class="t" style="left:0;top:3px"><w>付</w><w class="b">款</w><w>单</w></div></div>
<div class="a" style="left:238px;top:490px;width:1px;height:68px;background:#a0a0a0"></div>
<div class="a" style="left:239px;top:694px;width:1029px;height:24px;background:#f0f0f0;border-top:1px solid #a0a0a0"></div>
<div class="a" style="left:239px;top:695px;width:15px;height:22px;background:#f8f8f8;border-right:1px solid #a0a0a0"></div>
<div class="a" style="left:708px;top:697px;width:73px;height:18px;border:1px solid #c8c8c8;background:#f0f0f0"></div>
<div class="t" style="left:708px;width:69px;text-align:right;top:700px"><h>1120000.00</h></div>
<div class="a" style="left:785px;top:697px;width:65px;height:18px;border:1px solid #c8c8c8;background:#f0f0f0"></div>
<div class="t" style="left:785px;width:61px;text-align:right;top:700px"><h>165800.00</h></div>
<div class="a" style="left:854px;top:697px;width:71px;height:18px;border:1px solid #c8c8c8;background:#f0f0f0"></div>
<div class="t" style="left:854px;width:67px;text-align:right;top:700px"><h>200000.00</h></div>
<div class="a" style="left:239px;top:717px;width:1029px;height:20px;background:#eaeaea;border-top:1px solid #a0a0a0"></div>
<svg class="a" style="left:243px;top:721px" width="8" height="9" viewBox="0 0 8 9"><path d="M6 0.5 L1.5 4.5 L6 8.5 Z" fill="#303030"/></svg>
<svg class="a" style="left:1256px;top:721px" width="8" height="9" viewBox="0 0 8 9"><path d="M2 0.5 L6.5 4.5 L2 8.5 Z" fill="#303030"/></svg>
<div class="a" style="left:257px;top:719px;width:951px;height:15px;border:1px solid #a8a8a8;border-radius:2px;background:linear-gradient(#f4f4f4,#e8e8e8 50%,#d8d8d8 51%,#cfcfcf)"></div>
<div class="a" style="left:729px;top:723px;width:8px;height:7px;border-left:1px solid #707070;border-right:1px solid #707070"></div>
<div class="a" style="left:732px;top:723px;width:1px;height:7px;background:#707070"></div>
<div class="a" style="left:237px;top:735px;width:1035px;height:2px;background:#a0a0a0"></div>
<script>(function(){var s=document.createElement("span");s.style.cssText="position:absolute;left:0;top:0;visibility:hidden;white-space:nowrap;font:12px \"Liberation Sans\"";s.textContent="联营";document.body.appendChild(s);var w=s.getBoundingClientRect().width;document.body.removeChild(s);if(w<23)document.documentElement.className+=" nocjk";})();</script>
</body></html>
